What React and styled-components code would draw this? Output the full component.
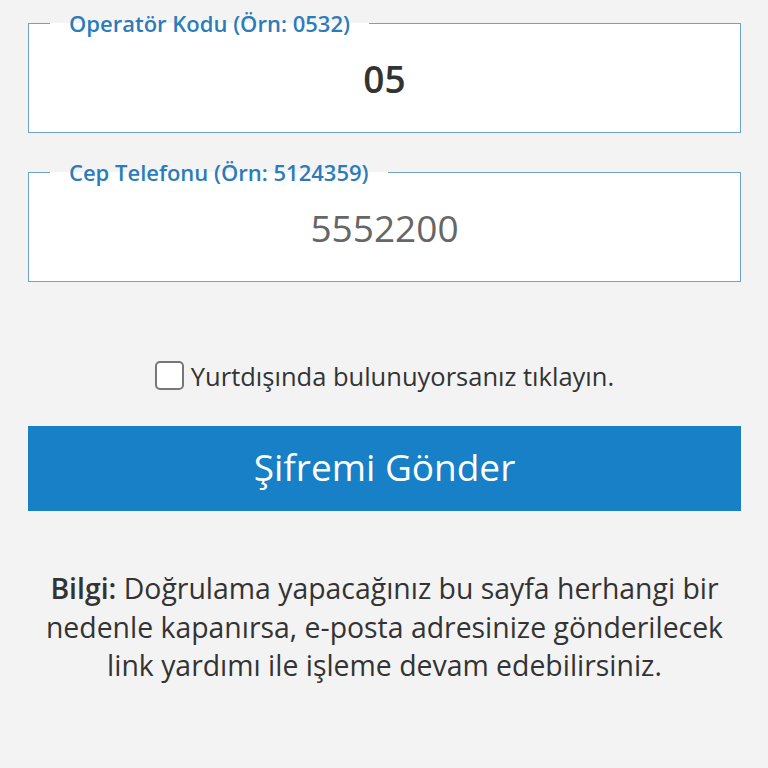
import { styled, createGlobalStyle } from 'styled-components'

const GlobalStyle = createGlobalStyle`
  html, body {
    margin: 0;
    padding: 0;
    background: #f3f3f3;
    font-family: "Open Sans", "Liberation Sans", sans-serif;
  }
`

const Page = styled.div`
  padding: 8px 27px 40px 28px;
  display: flex;
  flex-direction: column;
`

const Field = styled.fieldset`
  margin: 0 0 24px 0;
  padding: 0;
  border: 1px solid #6fa3cc;
  background: #fff;
  min-width: 0;
`

const Legend = styled.legend`
  margin-left: 21px;
  padding: 0 19px 0 19px;
  font-size: 22px;
  font-weight: 600;
  color: #2b7cba;
  line-height: 30px;
`

const NumberInput = styled.input`
  display: block;
  width: 100%;
  box-sizing: border-box;
  height: 94px;
  border: none;
  outline: none;
  background: transparent;
  text-align: center;
  font-family: inherit;
  font-size: 37px;
  font-weight: ${p => (p.$strong ? 600 : 400)};
  color: #333;
  padding: 0 0 14px 0;

  &::placeholder {
    color: #666;
    opacity: 1;
  }
`

const CheckRow = styled.label`
  margin-top: 50px;
  display: flex;
  align-items: center;
  justify-content: center;
  gap: 7px;
  font-size: 25.5px;
  color: #333;
  height: 40px;
`

const Box = styled.span`
  width: 25px;
  height: 25px;
  border: 2px solid #777;
  border-radius: 5px;
  background: #fff;
  box-sizing: content-box;
  flex: none;
  margin-bottom: 2px;
`

const SendButton = styled.button`
  margin-top: 30px;
  height: 85px;
  width: 100%;
  border: none;
  background: #1780c6;
  color: #fff;
  font-family: inherit;
  font-size: 37px;
  font-weight: 400;
  padding: 0 0 4px 0;
  cursor: pointer;
`

const Info = styled.p`
  margin: 58px 0 0 0;
  padding: 0 10px;
  text-align: center;
  font-size: 28.4px;
  line-height: 38.5px;
  color: #333;

  b {
    font-weight: 600;
  }
`

export default function App() {
  return (
    <>
      <GlobalStyle />
      <Page>
        <Field>
          <Legend>Operatör Kodu (Örn: 0532)</Legend>
          <NumberInput $strong defaultValue="05" />
        </Field>
        <Field>
          <Legend>Cep Telefonu (Örn: 5124359)</Legend>
          <NumberInput placeholder="5552200" />
        </Field>
        <CheckRow>
          <Box />
          Yurtdışında bulunuyorsanız tıklayın.
        </CheckRow>
        <SendButton>Şifremi Gönder</SendButton>
        <Info>
          <b>Bilgi:</b> Doğrulama yapacağınız bu sayfa herhangi bir nedenle kapanırsa, e-posta adresinize gönderilecek link yardımı ile işleme devam edebilirsiniz.
        </Info>
      </Page>
    </>
  )
}
